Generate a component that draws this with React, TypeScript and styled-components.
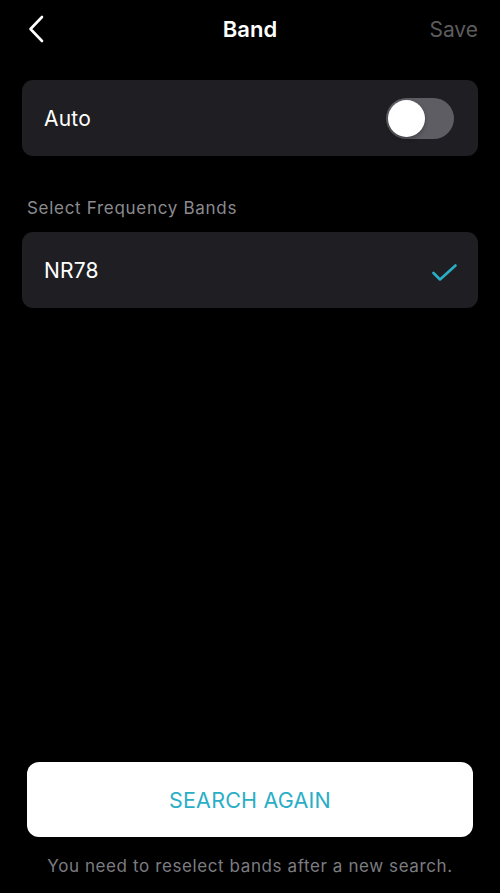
import React from 'react';
import styled, { createGlobalStyle } from 'styled-components';

const GlobalStyle = createGlobalStyle`
  html, body {
    margin: 0;
    padding: 0;
    background: #000;
  }
  body {
    font-family: Inter, "Noto Sans", "Liberation Sans", sans-serif;
    -webkit-font-smoothing: antialiased;
  }
`;

const Screen = styled.div`
  height: 893px;
  display: flex;
  flex-direction: column;
  background: #000;
  color: #fff;
  box-sizing: border-box;
`;

const Header = styled.header`
  height: 58px;
  display: grid;
  grid-template-columns: 80px 1fr 80px;
  align-items: center;
  padding: 0 22px 0 28px;
`;

const BackButton = styled.button`
  background: none;
  border: 0;
  padding: 0;
  width: 16px;
  height: 28px;
  display: flex;
  align-items: center;
  cursor: pointer;
`;

const Title = styled.h1`
  margin: 0 0 0 -6px;
  text-align: center;
  font-size: 22px;
  font-weight: 600;
  letter-spacing: 0;
`;

const SaveButton = styled.button`
  justify-self: end;
  background: none;
  border: 0;
  padding: 0;
  font-family: inherit;
  font-size: 21px;
  color: #5c5c5e;
`;

const Content = styled.main`
  flex: 1;
  padding: 22px 22px 0;
  display: flex;
  flex-direction: column;
`;

const Card = styled.div`
  height: 76px;
  background: #1f1f23;
  border-radius: 11px;
  display: flex;
  align-items: center;
  justify-content: space-between;
  padding: 0 20px 0 22px;
  font-size: 21px;
  letter-spacing: 0.2px;
`;

const SectionLabel = styled.div`
  margin: 42px 0 14px 5px;
  font-size: 17px;
  letter-spacing: 0.7px;
  color: #8b8b8f;
`;

const Track = styled.div<{ $on: boolean }>`
  width: 68px;
  height: 41px;
  border-radius: 21px;
  background: ${p => (p.$on ? '#2cb1c8' : '#5e5d64')};
  display: flex;
  align-items: center;
  justify-content: ${p => (p.$on ? 'flex-end' : 'flex-start')};
  padding: 0 2px;
  box-sizing: border-box;
  margin-right: 4px;
`;

const Knob = styled.div`
  width: 37px;
  height: 37px;
  border-radius: 50%;
  background: #fff;
  box-shadow: 0 2px 4px rgba(0, 0, 0, 0.3);
`;

const Footer = styled.footer`
  padding: 0 27px 17px;
  display: flex;
  flex-direction: column;
  align-items: center;
`;

const SearchButton = styled.button`
  width: 100%;
  height: 75px;
  background: #fff;
  border: 0;
  border-radius: 12px;
  font-family: inherit;
  font-size: 21.5px;
  color: #2aaec6;
  letter-spacing: 0.2px;
`;

const Hint = styled.p`
  margin: 19px 0 0;
  font-size: 17px;
  letter-spacing: 0.6px;
  color: #7c7c80;
`;

const Toggle: React.FC<{ on: boolean }> = ({ on }) => (
  <Track $on={on}>
    <Knob />
  </Track>
);

export default function App() {
  return (
    <>
      <GlobalStyle />
      <Screen>
        <Header>
          <BackButton aria-label="Back">
            <svg width="16" height="28" viewBox="0 0 16 28" fill="none">
              <path d="M14 2 L2.5 14 L14 26" stroke="#fff" strokeWidth="2.6" strokeLinecap="round" strokeLinejoin="round" />
            </svg>
          </BackButton>
          <Title>Band</Title>
          <SaveButton>Save</SaveButton>
        </Header>
        <Content>
          <Card>
            <span>Auto</span>
            <Toggle on={false} />
          </Card>
          <SectionLabel>Select Frequency Bands</SectionLabel>
          <Card>
            <span>NR78</span>
            <svg width="25" height="18" viewBox="0 0 25 18" fill="none" style={{ marginTop: 6, marginRight: 1 }}>
              <path d="M1.5 9 L8 15.5 L23.5 1.5" stroke="#2aaec6" strokeWidth="2.6" strokeLinecap="round" strokeLinejoin="round" />
            </svg>
          </Card>
        </Content>
        <Footer>
          <SearchButton>SEARCH AGAIN</SearchButton>
          <Hint>You need to reselect bands after a new search.</Hint>
        </Footer>
      </Screen>
    </>
  );
}
